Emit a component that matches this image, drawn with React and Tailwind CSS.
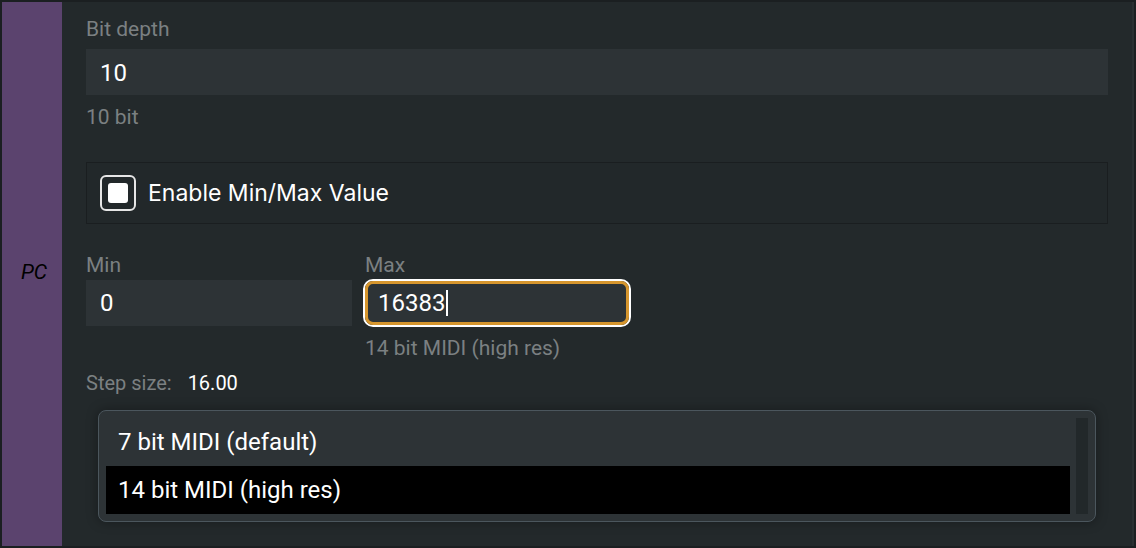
export default function App() {
  const font = { fontFamily: "Roboto, 'Liberation Sans', sans-serif" };
  return (
    <div
      className="w-[1136px] h-[548px] bg-[#1b1f21] p-[2px] flex overflow-hidden"
      style={font}
    >
      <div className="w-[60px] shrink-0 bg-[#5b436e] flex items-center justify-center">
        <span className="italic text-[21px] text-black -mt-[2px] ml-[4px]">PC</span>
      </div>
      <div className="flex-1 bg-[#23292b] pl-[24px] pr-[24px] pt-[14px] border-r-[2px] border-[#2a3032]">
        <div className="text-[21px] text-[#7b8082] leading-[26px]">Bit depth</div>
        <div className="mt-[7px] h-[46px] bg-[#2d3336] flex items-center pl-[14px] pt-[1px] text-[24px] text-white">
          10
        </div>
        <div className="mt-[9px] text-[21px] text-[#7b8082] leading-[26px]">10 bit</div>

        <div className="mt-[32px] h-[62px] border border-[#1a1e20] bg-[#22282a] flex items-center pl-[13px] gap-[12px]">
          <div className="w-[36px] h-[36px] rounded-[6px] border-[2px] border-[#e6e6e6] flex items-center justify-center">
            <div className="w-[20px] h-[20px] rounded-[3px] bg-white" />
          </div>
          <span className="text-[23px] text-white" style={{ fontFamily: "Inter, 'Liberation Sans', sans-serif" }}>
            Enable Min/Max Value
          </span>
        </div>

        <div className="mt-[28px] flex gap-[11px]">
          <div className="w-[266px]">
            <div className="text-[21px] text-[#7b8082] leading-[26px]">Min</div>
            <div className="mt-[2px] h-[46px] bg-[#2d3336] flex items-center pl-[14px] text-[24px] text-white">
              0
            </div>
          </div>
          <div className="w-[268px]">
            <div className="text-[21px] text-[#7b8082] leading-[26px] pl-[2px]">Max</div>
            <div className="mt-[1px] h-[48px] rounded-[10px] border-[2px] border-white p-0">
              <div className="h-full rounded-[8px] border-[3px] border-[#d6962e] bg-[#2d3336] flex items-center pl-[10px] text-[24px] text-white">
                16383
                <span className="inline-block w-[2px] h-[26px] bg-white ml-[1px]" />
              </div>
            </div>
            <div className="mt-[8px] text-[21px] text-[#7b8082] leading-[26px] pl-[2px]">14 bit MIDI (high res)</div>
          </div>
        </div>

        <div className="mt-[10px] flex items-center text-[20px] leading-[24px]">
          <span className="text-[#7b8082]">Step size:</span>
          <span className="text-white ml-[16px]">16.00</span>
        </div>

        <div className="mt-[15px] ml-[12px] mr-[12px] h-[112px] rounded-[8px] border border-[#4b565d] bg-[#2d3336] shadow-[0_0_12px_rgba(0,0,0,0.35)] flex p-[7px] pr-[7px] gap-[6px]">
          <div className="flex-1 flex flex-col">
            <div className="h-[48px] flex items-center pl-[12px] text-[24px] text-white">7 bit MIDI (default)</div>
            <div className="h-[48px] bg-black flex items-center pl-[12px] text-[24px] text-white">14 bit MIDI (high res)</div>
          </div>
          <div className="w-[12px] bg-[#22282a]" />
        </div>
      </div>
    </div>
  );
}
